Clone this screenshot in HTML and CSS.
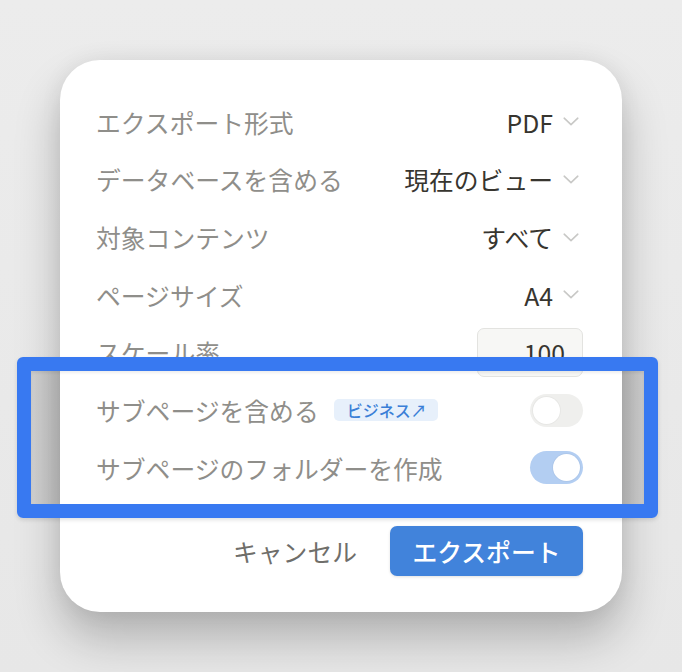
FILE: index.html
```html
<!DOCTYPE html>
<html lang="ja">
<head>
<meta charset="utf-8">
<title>エクスポート</title>
<link rel="stylesheet" href="styles.css">
</head>
<body>
<div class="stage">
  <div class="dialog">
    <div class="row">
      <span class="label">エクスポート形式</span>
      <span class="value">PDF<svg class="chev" viewBox="0 0 16 9" width="16" height="9"><path d="M1.2 1.2 L8 7.6 L14.8 1.2"/></svg></span>
    </div>
    <div class="row">
      <span class="label">データベースを含める</span>
      <span class="value">現在のビュー<svg class="chev" viewBox="0 0 16 9" width="16" height="9"><path d="M1.2 1.2 L8 7.6 L14.8 1.2"/></svg></span>
    </div>
    <div class="row">
      <span class="label">対象コンテンツ</span>
      <span class="value">すべて<svg class="chev" viewBox="0 0 16 9" width="16" height="9"><path d="M1.2 1.2 L8 7.6 L14.8 1.2"/></svg></span>
    </div>
    <div class="row">
      <span class="label">ページサイズ</span>
      <span class="value">A4<svg class="chev" viewBox="0 0 16 9" width="16" height="9"><path d="M1.2 1.2 L8 7.6 L14.8 1.2"/></svg></span>
    </div>
    <div class="row">
      <span class="label">スケール率</span>
      <div class="num">100</div>
    </div>
    <div class="row">
      <span class="label-group"><span class="label">サブページを含める</span><span class="badge">ビジネス↗</span></span>
      <span class="toggle"></span>
    </div>
    <div class="row">
      <span class="label">サブページのフォルダーを作成</span>
      <span class="toggle on"></span>
    </div>
    <div class="actions">
      <button class="cancel">キャンセル</button>
      <button class="primary">エクスポート</button>
    </div>
  </div>
  <div class="hl-dim"></div>
  <div class="hl-frame"></div>
</div>
</body>
</html>
```

FILE: styles.css
```css
html, body {
  margin: 0;
  padding: 0;
}
body {
  background: linear-gradient(180deg, #ececec 0%, #e7e7e7 100%);
  font-family: "Noto Sans CJK JP", "Noto Sans", sans-serif;
  width: 682px;
  height: 672px;
  overflow: hidden;
}
.stage {
  position: relative;
  width: 682px;
  height: 672px;
  padding: 60px 0 0 60px;
  box-sizing: border-box;
}
.dialog {
  position: relative;
  z-index: 1;
  width: 562px;
  box-sizing: border-box;
  padding: 33px 39px 36px 36px;
  background: #ffffff;
  border-radius: 40px;
  box-shadow: 0 26px 46px rgba(0, 0, 0, 0.24), 0 0 22px rgba(0, 0, 0, 0.06);
}
.row {
  height: 57.67px;
  display: flex;
  align-items: center;
  justify-content: space-between;
}
.label {
  font-size: 24.8px;
  color: #8f8e8a;
  white-space: nowrap;
}
.label-group {
  display: flex;
  align-items: center;
  gap: 15px;
}
.value {
  display: flex;
  align-items: center;
  font-size: 24.8px;
  color: #37352f;
  white-space: nowrap;
}
.chev {
  margin-left: 10px;
  margin-right: 4px;
  fill: none;
  stroke: #c8c8c6;
  stroke-width: 1.6;
  stroke-linecap: round;
  stroke-linejoin: round;
}
.num {
  width: 106px;
  height: 49px;
  box-sizing: border-box;
  background: #f7f7f5;
  border: 1px solid #e3e3e0;
  border-radius: 7px;
  font-size: 24.8px;
  color: #37352f;
  text-align: right;
  padding-right: 17px;
  line-height: 47px;
}
.badge {
  display: inline-flex;
  align-items: center;
  height: 22px;
  padding: 0 11px 0 13px;
  border-radius: 5px;
  background: #e7f0fb;
  color: #3a7fd7;
  font-size: 16px;
  font-weight: 500;
  line-height: 22px;
}
.toggle {
  position: relative;
  width: 53px;
  height: 33px;
  border-radius: 17px;
  background: #efefed;
  flex: none;
}
.toggle::after {
  content: "";
  position: absolute;
  top: 3px;
  left: 3px;
  width: 27px;
  height: 27px;
  border-radius: 50%;
  background: #ffffff;
  box-shadow: 0 0 0 1px rgba(0, 0, 0, 0.03);
}
.toggle.on {
  background: #b3cef2;
}
.toggle.on::after {
  left: 23px;
}
.actions {
  margin-top: 29px;
  display: flex;
  justify-content: flex-end;
  align-items: center;
  gap: 33px;
}
button {
  font-family: "Noto Sans CJK JP", "Noto Sans", sans-serif;
  border: none;
  margin: 0;
  padding: 0;
  cursor: pointer;
}
.cancel {
  background: transparent;
  color: #6f6e6a;
  font-size: 24.8px;
}
.primary {
  width: 193px;
  height: 50px;
  border-radius: 7px;
  background: #4183db;
  color: #ffffff;
  font-size: 24.8px;
  font-weight: 500;
  box-shadow: 0 1px 3px rgba(0, 0, 0, 0.12);
}
.hl-dim {
  position: absolute;
  z-index: 0;
  left: 31px;
  top: 371px;
  width: 613px;
  height: 133px;
  background: linear-gradient(90deg, #d2d2d2 0px, #c6c6c6 29px, #c6c6c6 591px, #d0d0d0 613px);
}
.hl-frame {
  position: absolute;
  z-index: 2;
  left: 17px;
  top: 357px;
  width: 641px;
  height: 161px;
  box-sizing: border-box;
  border: 14px solid #3879f1;
  border-radius: 6px;
  box-shadow: 0 2px 4px rgba(0, 0, 0, 0.12), inset 0 2px 3px rgba(0, 0, 0, 0.07);
}
```
